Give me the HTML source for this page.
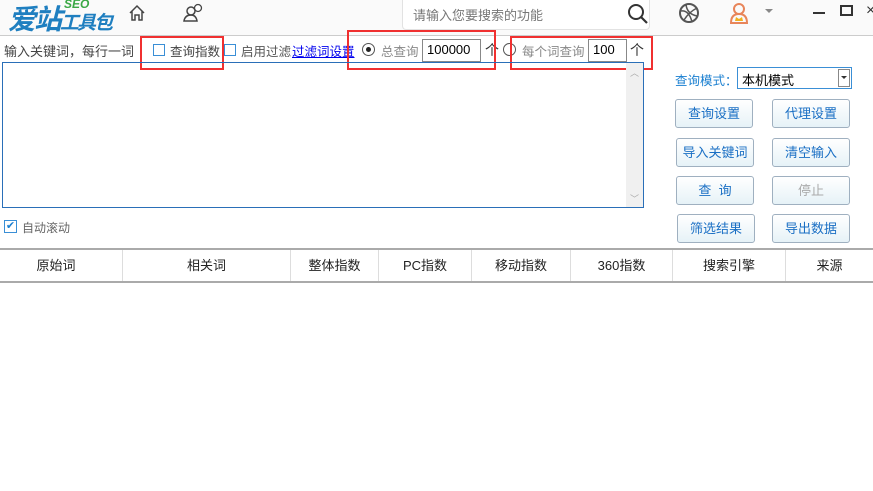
<!DOCTYPE html>
<html><head><meta charset="utf-8"><style>
*{margin:0;padding:0;box-sizing:border-box}
body{width:873px;height:491px;background:#fff;font-family:"Liberation Sans","Noto Sans CJK SC",sans-serif;font-size:12px;color:#333;position:relative;overflow:hidden}
.a{position:absolute}
.top{left:0;top:0;width:873px;height:36px;background:#fafafa;border-bottom:1px solid #ccc}
.search{left:402px;top:0;width:248px;height:30px;background:#fff;border:1px solid #e2e2e2;border-top:none;border-radius:0 0 4px 4px;color:#777;font-size:13px;padding:5px 10px}
.red{border:2px solid #f03030}
.cb{width:12px;height:12px;border:1px solid #3a8fd6;background:#fff}
.inp{border:1px solid #888;background:#fff;height:23px;padding:2px 4px;font-size:13px;color:#000}
.btn{width:78px;height:29px;border:1px solid #9fb0c0;border-radius:3px;background:linear-gradient(#fff,#e6f2f7);color:#1a6fc4;font-size:13px;text-align:center;line-height:27px}
.th{top:248px;height:35px;border-top:2px solid #aaa;border-bottom:2px solid #aaa;width:873px;left:0}
.c{position:absolute;top:0;height:31px;line-height:31px;text-align:center;font-size:13px;color:#222;border-left:1px solid #ddd}
</style></head><body>
<div class="a top"></div>
<div class="a" style="left:8px;top:-2px;font-size:28px;font-weight:bold;font-style:italic;color:#1f7fc0;letter-spacing:-2px">爱站<span style="font-size:19px">工具包</span></div>
<div class="a" style="left:64px;top:-3px;font-size:12px;font-weight:bold;font-style:italic;color:#3aa845">SEO</div>
<svg class="a" style="left:128px;top:4px" width="18" height="18" viewBox="0 0 18 18"><path d="M2 9 L9 2 L16 9 M4 7 V16 H7 V11 H11 V16 H14 V7" fill="none" stroke="#444" stroke-width="1.5"/></svg>
<svg class="a" style="left:182px;top:3px" width="22" height="20" viewBox="0 0 22 20"><circle cx="9" cy="8" r="4" fill="none" stroke="#444" stroke-width="1.5"/><path d="M2 18 Q3 12 9 12 Q14 12 15 18 Z" fill="none" stroke="#444" stroke-width="1.5"/><circle cx="16" cy="5" r="3.5" fill="#fff" stroke="#444" stroke-width="1.3"/></svg>
<div class="a search">请输入您要搜索的功能</div>
<svg class="a" style="left:626px;top:2px" width="24" height="24" viewBox="0 0 24 24"><circle cx="10" cy="10" r="7" fill="none" stroke="#333" stroke-width="2"/><path d="M15 15 L21 21" stroke="#333" stroke-width="2.2"/></svg>
<svg class="a" style="left:678px;top:2px" width="22" height="22" viewBox="0 0 22 22"><circle cx="11" cy="11" r="9" fill="none" stroke="#555" stroke-width="2"/><path d="M3 9 Q11 8 14 20 M8 2.5 Q9 12 19 14 M6 18 Q11 10 19 6" fill="none" stroke="#555" stroke-width="1.5"/></svg>
<svg class="a" style="left:728px;top:1px" width="22" height="24" viewBox="0 0 22 24"><circle cx="11" cy="8" r="5" fill="none" stroke="#e8855a" stroke-width="2"/><path d="M3 22 Q3 13 11 13 Q19 13 19 22 Z" fill="none" stroke="#e8855a" stroke-width="2"/><path d="M7 20 L8 16 L11 18 L14 16 L15 20 Z" fill="#f0b020"/></svg>
<div class="a" style="left:765px;top:9px;width:0;height:0;border:4px solid transparent;border-top:4px solid #888"></div>
<div class="a" style="left:813px;top:12px;width:12px;height:2px;background:#333"></div>
<div class="a" style="left:840px;top:5px;width:13px;height:11px;border:2px solid #333"></div>
<div class="a" style="left:866px;top:2px;font-size:16px;color:#333">×</div>

<div class="a" style="left:4px;top:41px;font-size:13px;color:#444">输入关键词，每行一词</div>
<div class="a cb" style="left:153px;top:44px"></div>
<div class="a" style="left:170px;top:41px;font-size:12.5px;color:#444">查询指数</div>
<div class="a cb" style="left:224px;top:44px"></div>
<div class="a" style="left:241px;top:41px;color:#555;font-size:12.5px">启用过滤</div>
<div class="a" style="left:292px;top:41px;color:#00e;text-decoration:underline;font-size:12.5px">过滤词设置</div>
<div class="a" style="left:362px;top:43px;width:13px;height:13px;border:1px solid #555;border-radius:50%"></div>
<div class="a" style="left:366px;top:47px;width:5px;height:5px;background:#222;border-radius:50%"></div>
<div class="a" style="left:381px;top:41px;color:#888;font-size:12.5px">总查询</div>
<div class="a inp" style="left:422px;top:39px;width:59px">100000</div>
<div class="a" style="left:485px;top:40px;font-size:14px">个</div>
<div class="a" style="left:503px;top:43px;width:13px;height:13px;border:1px solid #555;border-radius:50%"></div>
<div class="a" style="left:522px;top:41px;color:#888;font-size:12.5px">每个词查询</div>
<div class="a inp" style="left:588px;top:39px;width:39px">100</div>
<div class="a" style="left:630px;top:40px;font-size:14px">个</div>
<div class="a red" style="left:140px;top:36px;width:84px;height:34px"></div>
<div class="a red" style="left:347px;top:30px;width:149px;height:40px"></div>
<div class="a red" style="left:510px;top:36px;width:143px;height:34px"></div>

<div class="a" style="left:2px;top:62px;width:642px;height:146px;border:1px solid #2a6fb8"></div>
<div class="a" style="left:626px;top:63px;width:17px;height:144px;background:#f0f0f0"></div>
<div class="a" style="left:630px;top:66px;color:#aaa;font-size:9px">︿</div>
<div class="a" style="left:630px;top:192px;color:#aaa;font-size:9px">﹀</div>

<div class="a" style="left:4px;top:220px;width:13px;height:13px;border:1px solid #3a8fd6;color:#1a7fd0;font-size:11px;line-height:11px;text-align:center">✔</div>
<div class="a" style="left:22px;top:219px;color:#666">自动滚动</div>

<div class="a" style="left:675px;top:70px;color:#1a7fd0;font-size:12.5px">查询模式：</div>
<div class="a" style="left:737px;top:67px;width:115px;height:22px;border:1px solid #3a8fd6;background:#fff;padding:2px 4px;font-size:13px;color:#000">本机模式</div>
<div class="a" style="left:838px;top:69px;width:12px;height:18px;border:1px solid #888;background:#fff"></div>
<div class="a" style="left:841px;top:76px;border:3px solid transparent;border-top:3px solid #333"></div>
<div class="a btn" style="left:675px;top:99px">查询设置</div>
<div class="a btn" style="left:772px;top:99px">代理设置</div>
<div class="a btn" style="left:676px;top:138px">导入关键词</div>
<div class="a btn" style="left:772px;top:138px">清空输入</div>
<div class="a btn" style="left:676px;top:176px">查&nbsp;&nbsp;询</div>
<div class="a btn" style="left:772px;top:176px;color:#aaa">停止</div>
<div class="a btn" style="left:677px;top:214px">筛选结果</div>
<div class="a btn" style="left:772px;top:214px">导出数据</div>

<div class="a th">
<div class="c" style="left:0;width:112px;border:none">原始词</div>
<div class="c" style="left:122px;width:168px">相关词</div>
<div class="c" style="left:290px;width:88px">整体指数</div>
<div class="c" style="left:378px;width:93px">PC指数</div>
<div class="c" style="left:471px;width:99px">移动指数</div>
<div class="c" style="left:570px;width:102px">360指数</div>
<div class="c" style="left:672px;width:113px">搜索引擎</div>
<div class="c" style="left:785px;width:88px">来源</div>
</div>
</body></html>
